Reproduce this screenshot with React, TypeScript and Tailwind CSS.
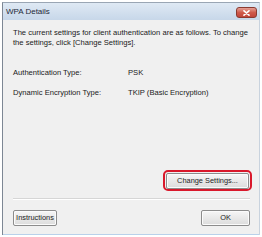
import React from "react";

const font = { fontFamily: '"Liberation Sans", Arial, sans-serif' };

function WinButton({ children, w }: { children: React.ReactNode; w: string }) {
  return (
    <div
      className={`${w} h-[16px] flex items-center justify-center rounded-[2px] border border-[#8c8c8c] bg-gradient-to-b from-[#f6f6f6] to-[#dcdcdc] text-[7.4px] text-[#222] shadow-[inset_0_0_0_1px_#fbfbfb]`}
    >
      {children}
    </div>
  );
}

export default function App() {
  return (
    <div className="w-[262px] h-[237px] bg-white overflow-hidden" style={font}>
      <div className="ml-[2px] mt-[2px] w-[258px] h-[233px] flex flex-col border-l border-[#7d8794] border-t border-t-[#9aa6b4] border-r border-r-[#c9d3de]">
        {/* title bar */}
        <div className="h-[17px] flex items-start bg-gradient-to-b from-[#dfe9f4] to-[#c7d7e9] shrink-0">
          <div className="pl-[3px] pt-[4px] text-[8px] leading-[9px] text-[#1e2a38]">WPA Details</div>
          <div className="ml-auto mr-[2px] mt-[4px] w-[21px] h-[11px] rounded-[3px] border border-[#8a3a30] bg-gradient-to-b from-[#e4a096] via-[#cf5a4b] to-[#c2453a] flex items-center justify-center">
            <svg width="7" height="6" viewBox="0 0 7 6">
              <path d="M1 0.8 L6 5.2 M6 0.8 L1 5.2" stroke="#ffffff" strokeWidth="1.6" strokeLinecap="round" />
            </svg>
          </div>
        </div>
        {/* body */}
        <div className="flex-1 flex flex-col bg-[#f0f0f0] pl-[10px] pr-[9px] pt-[8px] border-b border-b-[#b9d1ea] text-[7.6px] leading-[10px] text-[#1a1a1a]">
          <p className="w-[236px]">
            The current settings for client authentication are as follows. To change the settings, click [Change Settings].
          </p>
          <div className="mt-[20px] flex">
            <div className="w-[115px]">Authentication Type:</div>
            <div>PSK</div>
          </div>
          <div className="mt-[10px] flex">
            <div className="w-[115px]">Dynamic Encryption Type:</div>
            <div>TKIP (Basic Encryption)</div>
          </div>
          <div className="mt-[72px] flex justify-end -mr-[2px]">
            <div className="w-[89px] h-[21px] rounded-[5px] border-2 border-[#d9182b] flex items-center justify-center">
              <WinButton w="w-[83px]">Change Settings...</WinButton>
            </div>
          </div>
          <div className="mt-[7px] h-[2px] border-t border-[#d6d6d6] border-b border-b-white" />
          <div className="mt-[10px] flex justify-between">
            <WinButton w="w-[44px]">Instructions</WinButton>
            <WinButton w="w-[49px]">OK</WinButton>
          </div>
        </div>
      </div>
    </div>
  );
}
